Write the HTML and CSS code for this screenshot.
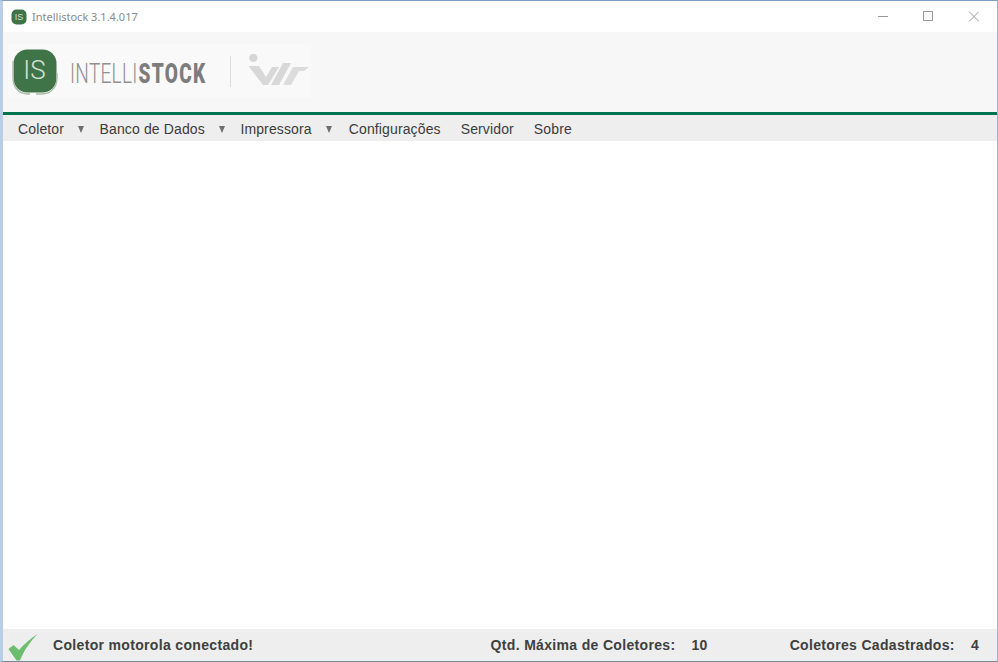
FILE: index.html
```html
<!DOCTYPE html>
<html lang="pt-BR">
<head>
<meta charset="utf-8">
<title>Intellistock 3.1.4.017</title>
<link rel="stylesheet" href="styles.css">
</head>
<body>
<div class="window">
  <div class="titlebar">
    <div class="title-left">
      <svg class="app-icon" width="16" height="16" viewBox="0 0 16 16"><rect x="0.5" y="0.5" width="15" height="15" rx="5" fill="#3f7348"/><text x="8" y="11" text-anchor="middle" class="app-icon-text">IS</text></svg>
      <span class="title-text">Intellistock 3.1.4.017</span>
    </div>
    <div class="controls">
      <svg width="11" height="11" viewBox="0 0 11 11"><path d="M0 5.5H10" stroke="#999" fill="none"/></svg>
      <svg width="11" height="11" viewBox="0 0 11 11"><rect x="0.5" y="0.5" width="9" height="9" stroke="#999" fill="none"/></svg>
      <svg width="11" height="11" viewBox="0 0 11 11"><path d="M1 0.5L11 10.5M11 0.5L1 10.5" stroke="#999" fill="none"/></svg>
    </div>
  </div>
  <header class="brand">
    <div class="brand-plate">
      <svg class="logo" width="46" height="46" viewBox="0 0 46 46">
        <rect x="1.5" y="0.5" width="43" height="43" rx="14" fill="#3f7348"/>
        <path d="M1 12V28C1 38 6 44 15 45H18M24 45H30C39 45 45 38 45 29V24" fill="none" stroke="#a9bca9" stroke-width="1.4"/>
        <text x="22.5" y="30" text-anchor="middle" class="logo-text">IS</text>
      </svg>
      <div class="wordmark"><span class="word-light">INTELLI</span><span class="word-bold">STOCK</span></div>
      <div class="brand-rule"></div>
      <svg class="partner" width="62" height="32" viewBox="0 0 62 32">
        <circle cx="6.3" cy="3.9" r="4.2" fill="#d6d6d6"/>
        <path d="M1.5 12H12L19 23L25 13H32L21 31H16Z" fill="#d8d8d8"/>
        <path d="M24 31L36 9H44L32 31Z" fill="#d8d8d8"/>
        <path d="M36 31L46 13H62L57 17H52L44 31Z" fill="#dcdcdc"/>
      </svg>
    </div>
  </header>
  <nav class="menu">
    <span class="menu-item has-arrow">Coletor</span>
    <span class="menu-item has-arrow">Banco de Dados</span>
    <span class="menu-item has-arrow has-arrow-last">Impressora</span>
    <span class="menu-item">Configurações</span>
    <span class="menu-item">Servidor</span>
    <span class="menu-item">Sobre</span>
  </nav>
  <main class="content"></main>
  <footer class="status">
    <svg class="check" width="30" height="27" viewBox="0 0 30 27"><path d="M0.5 15L5.5 11L11 16C16 10 22 5 29.5 0C23 7 16 16 12 26.5H8.5Z" fill="#6cbd6e"/></svg>
    <span class="status-msg">Coletor motorola conectado!</span>
    <span class="stat stat-max">Qtd. Máxima de Coletores:<span class="stat-value">10</span></span>
    <span class="stat stat-reg">Coletores Cadastrados:<span class="stat-value stat-value-last">4</span></span>
  </footer>
</div>
</body>
</html>
```
FILE: styles.css
```css
* { box-sizing: border-box; }
html, body { margin: 0; padding: 0; }
body { width: 998px; height: 662px; overflow: hidden; background: #fff; }
.window {
  width: 998px; height: 662px;
  display: flex; flex-direction: column;
  border-left: 3px solid #b9cde4;
  border-right: 1px solid #9fb4cc;
  border-top: 1px solid #7f9dc4;
  border-bottom: 1px solid #7d8895;
  font-family: "Liberation Sans", Arial, sans-serif;
}
.titlebar {
  height: 31px; flex: none; background: #fff;
  display: flex; align-items: center; justify-content: space-between;
}
.title-left { display: flex; align-items: center; padding-left: 8px; }
.app-icon { display: block; }
.app-icon-text { font: 9px "Liberation Sans", sans-serif; fill: #cfe0cf; }
.title-text { margin-left: 5px; font: 11px "Noto Sans", "Open Sans", sans-serif; color: #8a8a8a; }
.controls { display: flex; align-items: center; gap: 34px; padding-right: 18px; }
.controls svg { display: block; }
.brand { height: 80px; flex: none; background: #f7f7f7; padding-top: 12px; }
.brand-plate {
  width: 303px; height: 54px; margin-left: 5px; background: #f9f9f9;
  display: flex; align-items: center; padding-left: 4px;
}
.logo { display: block; flex: none; margin-top: 2px; }
.logo-text { font-family: "Roboto", "Liberation Sans", sans-serif; font-size: 26px; font-weight: 300; fill: #d5e3d5; }
.wordmark {
  margin: 6px 0 0 12px; width: 136px; flex: none; white-space: nowrap;
  font-family: "Roboto", "Liberation Sans", sans-serif;
  font-size: 28px; line-height: 30px;
  transform: scaleX(0.68); transform-origin: left center;
}
.word-light { font-weight: 300; color: #8f8f8f; letter-spacing: 0.4px; }
.word-bold { font-weight: 900; color: #7d7d7d; margin-left: 1.5px; letter-spacing: 1.9px; }
.brand-rule { width: 1px; height: 31px; margin-left: 24px; background: #dedede; flex: none; }
.partner { display: block; margin: -3px 0 0 16px; flex: none; }
.menu {
  height: 29px; flex: none; background: #eee;
  border-top: 3px solid #00734f; padding: 2px 0 0 15px;
  display: flex; align-items: center;
  font-size: 14px; letter-spacing: 0.13px; color: #3c3c3c;
}
.menu-item { margin-right: 20px; white-space: nowrap; }
.has-arrow { margin-right: 15.5px; display: flex; align-items: center; }
.has-arrow-last { margin-right: 17px; }
.has-arrow::after {
  content: ""; margin-left: 14px; width: 0; height: 0;
  border-left: 3.5px solid transparent; border-right: 3.5px solid transparent;
  border-top: 7px solid #6e6e6e;
}
.content { flex: 1; background: #fff; }
.status {
  height: 32px; flex: none; background: #eee;
  display: flex; align-items: center; padding-left: 5px;
  font-size: 14px; font-weight: 700; color: #404040; letter-spacing: 0.33px;
}
.check { display: block; flex: none; align-self: flex-start; margin-top: 5px; }
.status-msg { margin-left: 15px; white-space: nowrap; }
.stat { white-space: nowrap; }
.stat-max { margin-left: auto; }
.stat-reg { margin-left: 82px; }
.stat-value { margin-left: 16px; }
.stat-value-last { margin-left: 16px; margin-right: 18px; }
```
